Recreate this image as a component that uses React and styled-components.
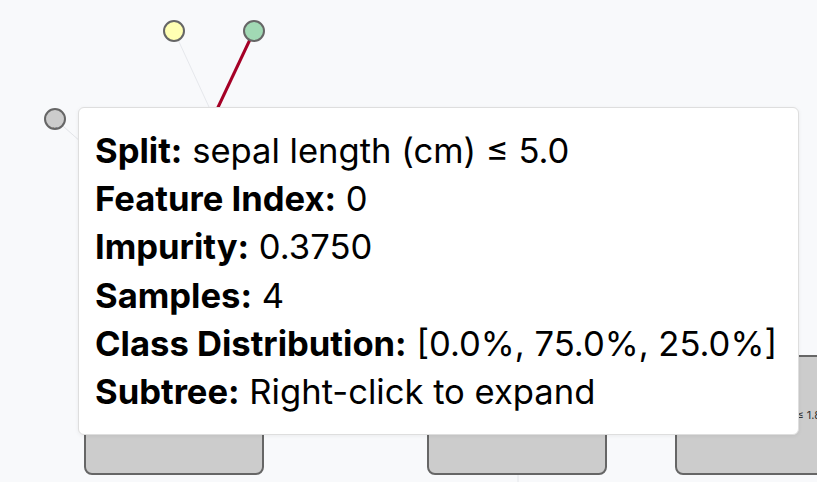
import styled, { createGlobalStyle } from 'styled-components';

const GlobalStyle = createGlobalStyle`
    html, body {
        margin: 0;
        padding: 0;
        background: #f8f9fb;
    }
`;

const Canvas = styled.div`
    position: relative;
    width: 817px;
    height: 482px;
    overflow: hidden;
    background: #f8f9fb;
    font-family: Inter, "Liberation Sans", sans-serif;
`;

const Edges = styled.svg`
    position: absolute;
    left: 0;
    top: 0;
`;

const BoxNode = styled.div`
    position: absolute;
    box-sizing: border-box;
    width: 180px;
    height: 120px;
    background: #cccccc;
    border: 2px solid #666666;
    border-radius: 8px;
    display: flex;
    align-items: center;
    justify-content: center;
    font-size: 11px;
    color: #333;
    white-space: nowrap;
`;

const Tooltip = styled.div`
    position: absolute;
    left: 78px;
    top: 107px;
    width: 721px;
    box-sizing: border-box;
    padding: 18px 18px 19px 16px;
    background: #ffffff;
    border: 1px solid #dedede;
    border-radius: 6px;
    box-shadow: 0 1px 4px rgba(0, 0, 0, 0.06);
    color: #000;
    font-size: 34.6px;
    line-height: 48.2px;
`;

const Row = styled.div`
    white-space: nowrap;
`;

const Label = styled.b`
    font-weight: 700;
`;

const rows = [
    ['Split:', 'sepal length (cm) ≤ 5.0'],
    ['Feature Index:', '0'],
    ['Impurity:', '0.3750'],
    ['Samples:', '4'],
    ['Class Distribution:', '[0.0%, 75.0%, 25.0%]'],
    ['Subtree:', 'Right-click to expand'],
];

function App() {
    return (
        <>
            <GlobalStyle />
            <Canvas>
                <Edges width="817" height="482">
                    <line x1="174" y1="31" x2="215" y2="120" stroke="#e6e8ec" strokeWidth="1" />
                    <line x1="55" y1="119" x2="90" y2="150" stroke="#e2e4e8" strokeWidth="1" />
                    <line x1="518" y1="440" x2="518" y2="482" stroke="#e4e6ea" strokeWidth="1" />
                    <line x1="254" y1="31" x2="212" y2="120" stroke="#a50026" strokeWidth="3" />
                    <circle cx="174" cy="31" r="10" fill="#ffffb3" stroke="#666" strokeWidth="2" />
                    <circle cx="254" cy="31" r="10" fill="#a1d9b4" stroke="#666" strokeWidth="2" />
                    <circle cx="55" cy="119" r="10" fill="#cccccc" stroke="#666" strokeWidth="2" />
                    <text x="55" y="128" fontSize="6" textAnchor="middle" fill="#333" fontFamily="Inter, sans-serif">...</text>
                </Edges>
                <BoxNode style={{ left: 84, top: 355 }} />
                <BoxNode style={{ left: 427, top: 355 }} />
                <BoxNode style={{ left: 675, top: 355 }}>petal width (cm) ≤ 1.8</BoxNode>
                <Tooltip>
                    {rows.map(([label, value]) => (
                        <Row key={label}>
                            <Label>{label}</Label> {value}
                        </Row>
                    ))}
                </Tooltip>
            </Canvas>
        </>
    );
}

export default App;
